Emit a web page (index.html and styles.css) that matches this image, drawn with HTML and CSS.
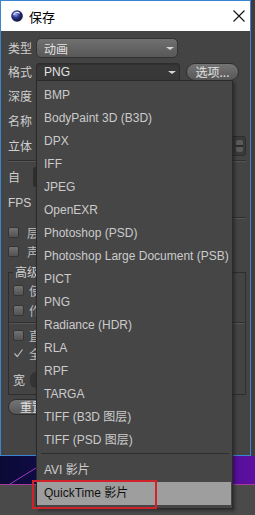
FILE: index.html
```html
<!DOCTYPE html>
<html>
<head>
    <title>保存</title>
    <link rel="stylesheet" href="styles.css">
</head>
<body>
    <div class="screen">
        <div class="top">
            <div class="window">
                <div class="titlebar">
                    <svg class="app-icon" viewBox="0 0 12 12">
                        <defs>
                            <radialGradient id="orb" cx="40%" cy="35%" r="70%">
                                <stop offset="0" stop-color="#9aa4ee"/>
                                <stop offset="0.45" stop-color="#2a3286"/>
                                <stop offset="1" stop-color="#0a0c2c"/>
                            </radialGradient>
                        </defs>
                        <circle cx="6" cy="6" r="5.8" fill="url(#orb)"/>
                        <path d="M2.6 5.2 A3.6 3.6 0 0 1 8.6 3.4" stroke="#e4e8ff" stroke-width="1.1" fill="none"/>
                    </svg>
                    <span class="title">保存</span>
                    <svg class="close" viewBox="0 0 12 12">
                        <path d="M0.5 0.5 L11.5 11.5 M11.5 0.5 L0.5 11.5" stroke="#111" stroke-width="1.1"/>
                    </svg>
                </div>

                <div class="dialog">
                    <div class="row r-type">
                        <span class="label">类型</span>
                        <div class="select light"><span>动画</span><i class="arrow"></i></div>
                    </div>
                    <div class="row r-format">
                        <span class="label">格式</span>
                        <div class="select dark"><span class="latin">PNG</span><i class="arrow"></i></div>
                        <button class="btn opts">选项...</button>
                    </div>
                    <div class="row"><span class="label">深度</span><div class="field"></div></div>
                    <div class="row"><span class="label">名称</span><div class="field"></div></div>
                    <div class="row">
                        <span class="label">立体</span>
                        <div class="field spin"><span class="spinner"></span></div>
                    </div>
                    <div class="sep s-1"></div>
                    <div class="row r-auto">
                        <span class="label narrow">自</span>
                        <div class="field tall"></div>
                    </div>
                    <div class="row r-fps"><span class="label latin">FPS</span><div class="field"></div></div>
                    <div class="sep s-2"></div>
                    <div class="check c-1"><span class="box"></span><span>层</span></div>
                    <div class="check c-2"><span class="box"></span><span>声</span></div>

                    <fieldset class="group">
                        <legend>高级</legend>
                        <div class="check g-1"><span class="box"></span><span>使</span></div>
                        <div class="check g-2"><span class="box"></span><span>作</span></div>
                        <div class="sep g-sep"></div>
                        <div class="check g-3"><span class="box"></span><span>直</span></div>
                        <div class="check g-4">
                            <svg class="tick" viewBox="0 0 10 10"><path d="M1 5.5 L3.8 8.5 L9 1.5" stroke="#b8b8b8" stroke-width="1.2" fill="none"/></svg>
                            <span>全</span>
                        </div>
                        <div class="row g-5"><span class="label small">宽</span><div class="field low"></div></div>
                    </fieldset>

                    <button class="btn reset">重置</button>
                </div>
            </div>
            <div class="edge"></div>
        </div>

        <div class="viewport">
            <svg class="vp-line" viewBox="0 0 255 28" preserveAspectRatio="none">
                <path d="M10 28 L36 12" stroke="#a03ab8" stroke-width="1" fill="none"/>
            </svg>
        </div>
        <div class="floor"></div>

        <ul class="popup">
            <li class="item">BMP</li>
            <li class="item">BodyPaint 3D (B3D)</li>
            <li class="item">DPX</li>
            <li class="item">IFF</li>
            <li class="item">JPEG</li>
            <li class="item">OpenEXR</li>
            <li class="item">Photoshop (PSD)</li>
            <li class="item">Photoshop Large Document (PSB)</li>
            <li class="item">PICT</li>
            <li class="item">PNG</li>
            <li class="item">Radiance (HDR)</li>
            <li class="item">RLA</li>
            <li class="item">RPF</li>
            <li class="item">TARGA</li>
            <li class="item">TIFF (B3D 图层)</li>
            <li class="item">TIFF (PSD 图层)</li>
            <li class="menu-sep"></li>
            <li class="item">AVI 影片</li>
            <li class="item active">QuickTime 影片</li>
        </ul>
        <div class="mark"></div>
    </div>
</body>
</html>
```

FILE: styles.css
```css
body {
    margin: 0;
    background: #3d3d3d;
    font-family: "Liberation Sans", "Noto Sans CJK SC", sans-serif;
    font-size: 12px;
}
.screen {
    position: relative;
    width: 255px;
    height: 515px;
    overflow: hidden;
    display: flex;
    flex-direction: column;
}
.top {
    display: flex;
    height: 456px;
    flex-shrink: 0;
}
.window {
    width: 251px;
    box-sizing: border-box;
    border: 1px solid #3a84d2;
    display: flex;
    flex-direction: column;
}
.edge {
    flex: 1;
    background: #3e3e3e;
}
.titlebar {
    height: 30px;
    flex-shrink: 0;
    background: #fff;
    display: flex;
    align-items: center;
    padding-left: 10px;
}
.app-icon {
    width: 12px;
    height: 12px;
}
.title {
    margin-left: 6px;
    font: 13px "Noto Sans CJK SC", sans-serif;
    color: #000;
}
.close {
    width: 12px;
    height: 12px;
    margin-left: auto;
    margin-right: 5px;
}
.dialog {
    flex: 1;
    background: #444;
    padding: 0 4px 0 7px;
    display: flex;
    flex-direction: column;
    color: #cfcfcf;
    font-family: "Noto Sans CJK SC", sans-serif;
}
.latin {
    font-family: "Liberation Sans", sans-serif;
}
.row {
    display: flex;
    align-items: center;
    height: 20px;
    margin-top: 5px;
    flex-shrink: 0;
}
.label {
    width: 28px;
    flex-shrink: 0;
    line-height: 14px;
}
.label.narrow {
    width: 25px;
}
.label.small {
    width: 17px;
}
.r-type {
    margin-top: 7px;
}
.r-format {
    height: 18px;
}
.select {
    box-sizing: border-box;
    display: flex;
    align-items: center;
    padding-left: 7px;
    color: #e2e2e2;
}
.select.light {
    width: 142px;
    height: 20px;
    border-radius: 5px;
    border: 1px solid #333;
    background: linear-gradient(#707070, #585858);
}
.select.dark {
    width: 144px;
    height: 18px;
    border-radius: 3px;
    border: 1px solid #2c2c2c;
    background: #383838;
    box-shadow: inset 0 1px 0 #303030;
}
.arrow {
    margin-left: auto;
    margin-right: 3px;
    width: 0;
    height: 0;
    border-left: 4px solid transparent;
    border-right: 4px solid transparent;
    border-top: 3px solid #d6d6d6;
}
.btn {
    box-sizing: border-box;
    padding: 0;
    border: 1px solid #2e2e2e;
    background: linear-gradient(#747474, #575757);
    color: #e0e0e0;
    font: 12px "Noto Sans CJK SC", sans-serif;
    line-height: 14px;
}
.opts {
    margin-left: 6px;
    width: 53px;
    height: 18px;
    border-radius: 9px;
}
.field {
    flex: 1;
    height: 18px;
    margin-right: 24px;
    border-radius: 3px;
    background: #363636;
}
.field.spin {
    margin-right: 0;
    display: flex;
    justify-content: flex-end;
    align-items: center;
    background: #3a3a3a;
    border: 1px solid #2e2e2e;
}
.spinner {
    width: 7px;
    height: 12px;
    margin-right: 2px;
    background:
        linear-gradient(to bottom, transparent 5px, #2c2c2c 5px, #2c2c2c 7px, transparent 7px),
        #5a5a5a;
    border-radius: 2px;
}
.field.tall {
    height: 20px;
    background: #2f2f2f;
}
.field.low {
    height: 16px;
    background: #333;
    border-radius: 6px;
}
.sep {
    flex-shrink: 0;
    height: 1px;
    background: #303030;
    border-bottom: 1px solid #555;
}
.s-1 {
    margin-top: 4px;
}
.r-auto {
    margin-top: 5px;
}
.r-fps {
    margin-top: 6px;
}
.s-2 {
    margin-top: 4px;
    margin-left: 28px;
}
.check {
    display: flex;
    align-items: center;
    gap: 8px;
    height: 16px;
    flex-shrink: 0;
    color: #bdbdbd;
}
.box {
    width: 9px;
    height: 9px;
    border-radius: 2px;
    border: 1px solid #353535;
    background: linear-gradient(#727272, #525252);
}
.c-1 {
    margin-top: 5px;
}
.c-2 {
    margin-top: 3px;
}
.group {
    margin: 7px 0 0;
    padding: 0 4px 6px;
    border: 1px solid #2e2e2e;
    min-width: 0;
    flex-shrink: 0;
}
.group legend {
    padding: 0 2px;
    line-height: 12px;
    font-size: 12px;
    color: #cfcfcf;
}
.group .check {
    gap: 5px;
}
.g-1 {
    margin-top: 4px;
}
.g-2 {
    margin-top: 4px;
}
.g-sep {
    margin: 4px -4px 0;
}
.g-3 {
    margin-top: 3px;
}
.g-4 {
    margin-top: 2px;
}
.tick {
    width: 11px;
    height: 10px;
}
.g-5 {
    margin-top: 11px;
    height: 16px;
}
.reset {
    margin-top: 4px;
    width: 70px;
    height: 16px;
    border-radius: 8px;
    text-align: left;
    padding-left: 11px;
    flex-shrink: 0;
}
.viewport {
    position: relative;
    height: 28px;
    flex-shrink: 0;
    background: linear-gradient(90deg, #0a0a36 0%, #170c52 30%, #360c7c 65%, #5f10a2 100%);
    border-bottom: 1px solid #a8389e;
}
.vp-line {
    display: block;
    width: 100%;
    height: 100%;
}
.floor {
    flex: 1;
    background: #4a4a4a;
}
.popup {
    position: absolute;
    left: 36px;
    top: 80px;
    width: 197px;
    box-sizing: border-box;
    margin: 0;
    padding: 3px 0;
    list-style: none;
    background: #464646;
    border: 1px solid #2a2a2a;
    box-shadow: 2px 2px 3px rgba(0, 0, 0, 0.35);
}
.item {
    height: 23px;
    line-height: 23px;
    padding-left: 7px;
    color: #cbcbcb;
    white-space: nowrap;
}
.item.active {
    background: #9e9e9e;
    color: #111;
    margin-right: 1px;
}
.menu-sep {
    height: 0;
    border-top: 1px solid #2e2e2e;
    margin: 1px 3px 5px 4px;
}
.mark {
    position: absolute;
    left: 32px;
    top: 480px;
    width: 125px;
    height: 29px;
    box-sizing: border-box;
    border: 2px solid #cf2229;
}
```
